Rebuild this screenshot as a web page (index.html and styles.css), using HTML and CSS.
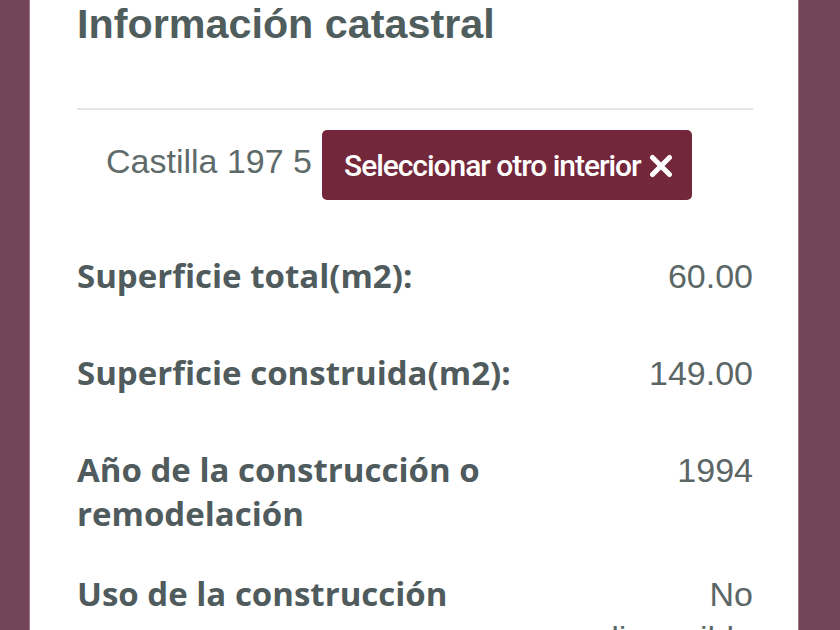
FILE: index.html
```html
<!DOCTYPE html>
<html lang="es">
<head>
<meta charset="utf-8">
<title>Información catastral</title>
<link rel="stylesheet" href="styles.css">
</head>
<body>
<div class="map">
  <section class="panel">
    <h2 class="title">Información catastral</h2>
    <hr class="sep">
    <div class="address">
      <span class="address-text">Castilla 197 5</span>
      <button class="btn"><span class="btn-text">Seleccionar otro interior</span>
        <svg class="x" viewBox="0 0 24 24" width="24" height="24" aria-hidden="true"><path d="M3.5 3.5 L20.5 20.5 M20.5 3.5 L3.5 20.5" stroke="#fff" stroke-width="5" stroke-linecap="round" fill="none"/></svg>
      </button>
    </div>
    <div class="rows">
      <div class="row"><div class="label">Superficie total(m2):</div><div class="value">60.00</div></div>
      <div class="row"><div class="label">Superficie construida(m2):</div><div class="value">149.00</div></div>
      <div class="row"><div class="label">Año de la construcción o remodelación</div><div class="value">1994</div></div>
      <div class="row"><div class="label">Uso de la construcción</div><div class="value">No disponible</div></div>
    </div>
  </section>
</div>
</body>
</html>
```
FILE: styles.css
```css
html, body {
  margin: 0;
  padding: 0;
}
body {
  width: 840px;
  height: 630px;
  overflow: hidden;
  background: #714557;
}
.map {
  height: 630px;
  padding-left: 30px;
  overflow: hidden;
}
.panel {
  width: 768px;
  height: 700px;
  box-sizing: border-box;
  background: #ffffff;
  padding: 0 45px 0 47px;
  box-shadow: 0 0 0 1px rgba(255, 220, 230, 0.35);
}
.title {
  margin: 0;
  font-family: "Liberation Sans", Arial, sans-serif;
  font-weight: 700;
  font-size: 41.3px;
  line-height: 48px;
  color: #505d5d;
}
.sep {
  margin: 60px 0 0 0;
  border: 0;
  height: 2px;
  background: #e4e6e9;
}
.address {
  display: flex;
  align-items: center;
  gap: 10px;
  margin-top: 20px;
  padding-left: 29px;
}
.address-text {
  font-family: "Liberation Sans", Arial, sans-serif;
  font-size: 34px;
  color: #5f6b6b;
  padding-bottom: 7px;
}
.btn {
  display: flex;
  align-items: center;
  gap: 8px;
  height: 70px;
  box-sizing: border-box;
  padding: 0 19px 0 22px;
  border: 0;
  border-radius: 5px;
  background: #73273b;
  color: #ffffff;
  font-family: Roboto, "Liberation Sans", sans-serif;
  font-weight: 500;
  font-size: 30px;
  letter-spacing: -1.05px;
}
.x {
  display: block;
  margin-top: 1px;
}
.rows {
  margin-top: 54px;
}
.row {
  display: flex;
  justify-content: space-between;
  align-items: flex-start;
  min-height: 97px;
  padding-bottom: 36px;
  box-sizing: border-box;
}
.label {
  width: 500px;
  font-family: "Open Sans", sans-serif;
  font-weight: 700;
  font-size: 33px;
  line-height: 44px;
  color: #4f5b5c;
}
.value {
  width: 170px;
  text-align: right;
  font-family: "Liberation Sans", Arial, sans-serif;
  font-size: 34px;
  line-height: 44px;
  color: #5b6767;
}
```
